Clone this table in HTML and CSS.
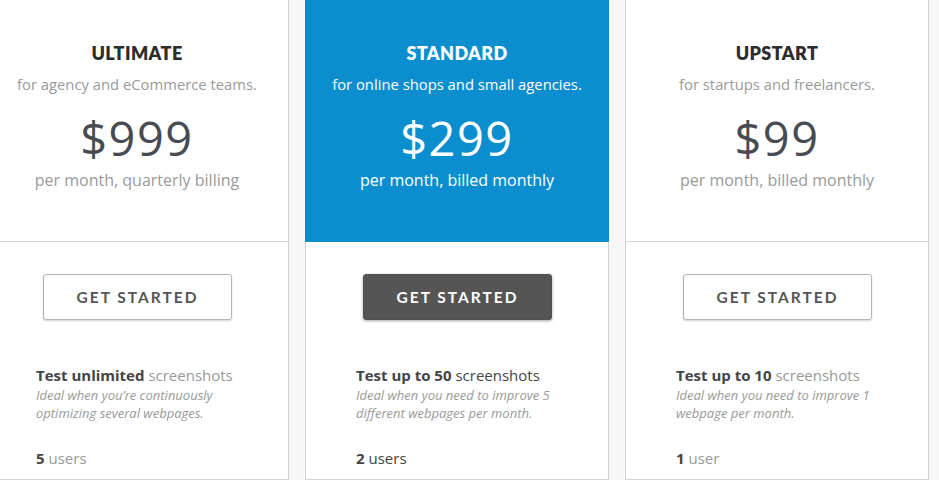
FILE: index.html
```html
<!DOCTYPE html>
<html>
<head>
<meta charset="utf-8">
<link rel="stylesheet" href="styles.css">
</head>
<body>
<div class="plans">
  <div class="card">
    <div class="head">
      <h2 class="title">ULTIMATE</h2>
      <p class="sub">for agency and eCommerce teams.</p>
      <div class="price">$999</div>
      <p class="period">per month, quarterly billing</p>
    </div>
    <div class="body">
      <a class="btn">GET STARTED</a>
      <p class="feat"><b>Test unlimited</b> <span class="muted">screenshots</span></p>
      <p class="note">Ideal when you’re continuously optimizing several webpages.</p>
      <p class="users"><b>5</b> <span class="muted">users</span></p>
    </div>
  </div>
  <div class="card featured">
    <div class="head">
      <h2 class="title">STANDARD</h2>
      <p class="sub">for online shops and small agencies.</p>
      <div class="price">$299</div>
      <p class="period">per month, billed monthly</p>
    </div>
    <div class="body">
      <a class="btn btn-dark">GET STARTED</a>
      <p class="feat"><b>Test up to 50</b> <span class="muted">screenshots</span></p>
      <p class="note">Ideal when you need to improve 5 different webpages per month.</p>
      <p class="users"><b>2</b> <span class="muted">users</span></p>
    </div>
  </div>
  <div class="card">
    <div class="head">
      <h2 class="title">UPSTART</h2>
      <p class="sub">for startups and freelancers.</p>
      <div class="price">$99</div>
      <p class="period">per month, billed monthly</p>
    </div>
    <div class="body">
      <a class="btn">GET STARTED</a>
      <p class="feat"><b>Test up to 10</b> <span class="muted">screenshots</span></p>
      <p class="note">Ideal when you need to improve 1 webpage per month.</p>
      <p class="users"><b>1</b> <span class="muted">user</span></p>
    </div>
  </div>
</div>
</body>
</html>
```

FILE: styles.css
```css
* { box-sizing: border-box; }
html, body {
  margin: 0;
  padding: 0;
  background: #f7f7f7;
  font-family: "Open Sans", "Liberation Sans", sans-serif;
  overflow: hidden;
}
.plans {
  display: flex;
  gap: 16px;
  margin-left: -15px;
  height: 480px;
}
.card {
  flex: 0 0 304px;
  background: #fff;
  border: 1px solid #d3d3d3;
  border-top: none;
  display: flex;
  flex-direction: column;
}
.head {
  height: 242px;
  border-bottom: 1px solid #d6d6d6;
  text-align: center;
  padding-top: 42px;
}
.featured .head {
  background: #0b8ecf;
  margin: 0 -1px;
  border-bottom: none;
  height: 242px;
}
.title {
  margin: 0;
  font-family: Lato, "Open Sans", sans-serif;
  font-size: 18px;
  line-height: 22px;
  font-weight: 800;
  letter-spacing: 0.4px;
  color: #2c2c2c;
}
.sub {
  margin: 10px 0 0;
  font-size: 14.8px;
  line-height: 20px;
  color: #9a9a9a;
}
.price {
  margin-top: 15px;
  font-size: 47px;
  line-height: 58px;
  letter-spacing: 1.5px;
  color: #474c52;
}
.period {
  margin: 2px 0 0;
  font-size: 16px;
  line-height: 22px;
  color: #9a9a9a;
}
.featured .title,
.featured .sub,
.featured .price,
.featured .period { color: #fff; }

.body {
  padding: 32px 0 0 50px;
  display: flex;
  flex-direction: column;
}
.btn {
  align-self: flex-start;
  margin-left: 7px;
  width: 189px;
  height: 46px;
  display: flex;
  align-items: center;
  justify-content: center;
  border: 1px solid #b5b5b5;
  border-radius: 3px;
  box-shadow: 0 1px 2px rgba(0,0,0,0.18);
  font-family: Lato, "Open Sans", sans-serif;
  font-size: 15.5px;
  font-weight: 700;
  letter-spacing: 2px;
  color: #555;
  background: #fff;
}
.btn-dark {
  background: #555;
  border-color: #505050;
  color: #fff;
  box-shadow: 0 1px 3px rgba(0,0,0,0.35);
}
.feat {
  margin: 45px 0 0;
  font-size: 15px;
  line-height: 20px;
  color: #444;
}
.feat b, .users b { font-weight: 700; color: #444; }
.muted { color: #999; }
.featured .muted { color: #444; }
.note {
  margin: 1px 0 0;
  width: 225px;
  font-size: 13px;
  line-height: 18px;
  font-style: italic;
  color: #999;
}
.users {
  margin: 26px 0 0;
  font-size: 15px;
  line-height: 20px;
  color: #444;
}
```
